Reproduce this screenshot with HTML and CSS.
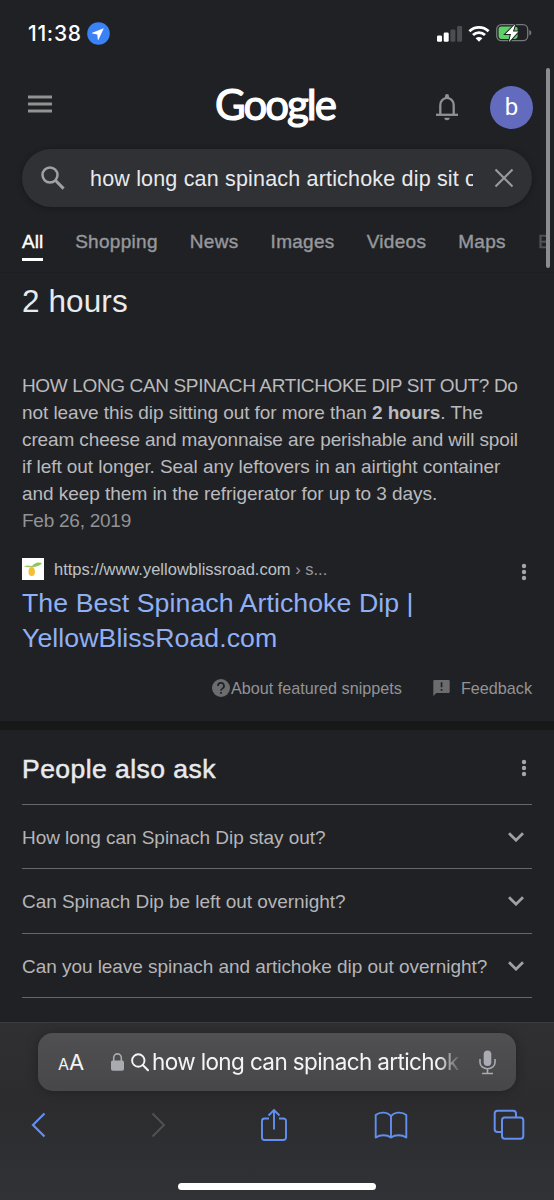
FILE: index.html
```html
<!DOCTYPE html>
<html lang="en">
<head>
<meta charset="utf-8">
<title>Search results</title>
<link rel="stylesheet" href="styles.css">
</head>
<body>
<div class="phone">
  <div class="status">
    <span class="clock">11:38</span>
    <svg class="location" width="23" height="23" viewBox="0 0 23 23"><circle cx="11.5" cy="11.5" r="11.3" fill="#3b82f7"/><path d="M16.8 6.2 5.2 10.8q-.8.5.1.8l5 .8.5 5.2q.3.8.8 0z" fill="#fff"/></svg>
    <svg class="signal" width="26" height="17" viewBox="0 0 26 17"><rect x="0" y="10.5" width="5" height="6.3" rx="1.2" fill="#fff"/><rect x="6.7" y="7.5" width="5" height="9.3" rx="1.2" fill="#fff"/><rect x="13.4" y="4.5" width="5" height="12.3" rx="1.2" fill="#4c4d50"/><rect x="20.1" y="1" width="5" height="15.8" rx="1.2" fill="#4c4d50"/></svg>
    <svg class="wifi" width="22" height="17" viewBox="0 0 22 17"><g fill="none" stroke="#fff" stroke-width="2.8"><path d="M1.4 6.3a13.8 13.8 0 0 1 19.2 0"/><path d="M5 10.1a8.6 8.6 0 0 1 12 0"/></g><path d="M11 16.7 7.6 13.3a4.9 4.9 0 0 1 6.8 0z" fill="#fff"/></svg>
    <svg class="battery" width="36" height="20" viewBox="0 0 36 20"><rect x=".7" y="1.7" width="31" height="16" rx="4.6" fill="none" stroke="#77787b" stroke-width="1.3"/><rect x="2.6" y="3.5" width="19" height="12.4" rx="2.8" fill="#5fd068"/><path d="M33.3 7v5.600q2.100-.8 2.100-2.800t-2.100-2.800z" fill="#77787b"/><path d="M19.300 1.100 9.500 11h5.500l-2.100 8L22.400 8.500h-5.500z" fill="#fff" stroke="#202124" stroke-width="2" paint-order="stroke"/></svg>
  </div>

  <header class="header">
    <svg class="menu" width="24" height="18" viewBox="0 0 24 18"><path d="M0 2h24M0 9h24M0 16h24" stroke="#919293" stroke-width="2.800"/></svg>
    <div class="logo">Google</div>
    <svg class="bell" width="22" height="27" viewBox="0 0 22 27"><path d="M4.300 20V11.200a6.700 7.300 0 0 1 13.400 0V20" fill="none" stroke="#8f9194" stroke-width="2.300"/><path d="M0 20.800h22" stroke="#8f9194" stroke-width="2.300"/><path d="M9 4V2a2 2 0 0 1 4 0v2zM8.300 23.800h5.400a2.700 2.400 0 0 1-5.400 0z" fill="#8f9194"/></svg>
    <div class="avatar">b</div>
  </header>

  <div class="search">
    <svg class="search-glass" width="24" height="24" viewBox="0 0 24 24" fill="none" stroke="#a0a1a4"><circle cx="9" cy="9" r="7.500" stroke-width="2.500"/><path d="m14.300 14.300 8.300 8.300" stroke-width="3"/></svg>
    <div class="query">how long can spinach artichoke dip sit out</div>
    <svg class="clear" width="20" height="20" viewBox="0 0 20 20"><path d="m1.500 1.500 17 17m0-17-17 17" stroke="#98999c" stroke-width="2.200"/></svg>
  </div>

  <nav class="tabs">
    <span class="tab active">All</span><span class="tab">Shopping</span><span class="tab">News</span><span class="tab">Images</span><span class="tab">Videos</span><span class="tab">Maps</span><span class="tab faded">B</span>
  </nav>

  <main class="answer">
    <div class="headline">2 hours</div>
    <p class="snippet">
      <span class="line l1">HOW LONG CAN SPINACH ARTICHOKE DIP SIT OUT? Do</span>
      <span class="line l2">not leave this dip sitting out for more than <b>2 hours</b>. The</span>
      <span class="line l3">cream cheese and mayonnaise are perishable and will spoil</span>
      <span class="line l4">if left out longer. Seal any leftovers in an airtight container</span>
      <span class="line l5">and keep them in the refrigerator for up to 3 days.</span>
      <span class="line date">Feb 26, 2019</span>
    </p>
    <div class="source">
      <svg width="22" height="22" viewBox="0 0 22 22"><path d="M0 0h22v22H0z" fill="#fff"/><path d="M10 8q4-5 10-3-3 4-9 3z" fill="#8dc45b"/><path d="M2 8q4-1 8 0 4 0 7-1-4 3-8 2-5 1-7-1z" fill="#9ccc65"/><ellipse cx="9.700" cy="13.500" rx="3.200" ry="4.600" fill="#f4bf35"/></svg>
      <span class="url">https://www.yellowblissroad.com <span class="crumb">› s...</span></span>
      <svg class="dots" width="6" height="18" viewBox="0 0 6 18" fill="#a5a6a9"><circle cx="3" cy="3" r="2.200"/><circle cx="3" cy="9" r="2.200"/><circle cx="3" cy="15" r="2.200"/></svg>
    </div>
    <a class="title">The Best Spinach Artichoke Dip |<br>YellowBlissRoad.com</a>
    <div class="meta">
      <svg width="18" height="18" viewBox="0 0 18 18"><circle cx="9" cy="9" r="9" fill="#6b6c6e"/><path d="M6 7a3 3 0 1 1 4.600 2.400Q9 10.400 9 11.800" fill="none" stroke="#202124" stroke-width="1.700"/><path d="M8.100 13h1.800v1.800H8.100z" fill="#202124"/></svg>
      <span>About featured snippets</span>
      <svg class="flag" width="17" height="17" viewBox="0 0 17 17"><path d="M1.500 0h14q1.200 0 1.200 1.200v10.500q0 1.200-1.200 1.200H3.300L.3 16V1.200Q.3 0 1.500 0z" fill="#6b6c6e"/><path d="M7.700 2.300h1.700v5H7.700zM7.700 9h1.700v1.700H7.700z" fill="#202124"/></svg>
      <span>Feedback</span>
    </div>
  </main>

  <section class="ask">
    <div class="ask-head">
      <h2>People also ask</h2>
      <svg class="dots" width="6" height="18" viewBox="0 0 6 18" fill="#a5a6a9"><circle cx="3" cy="3" r="2.200"/><circle cx="3" cy="9" r="2.200"/><circle cx="3" cy="15" r="2.200"/></svg>
    </div>
    <div class="question"><span>How long can Spinach Dip stay out?</span><svg width="16" height="10" viewBox="0 0 16 10"><path d="m1 1.200 7 7 7-7" fill="none" stroke="#a0a1a4" stroke-width="2.700"/></svg></div>
    <div class="question"><span>Can Spinach Dip be left out overnight?</span><svg width="16" height="10" viewBox="0 0 16 10"><path d="m1 1.200 7 7 7-7" fill="none" stroke="#a0a1a4" stroke-width="2.700"/></svg></div>
    <div class="question"><span>Can you leave spinach and artichoke dip out overnight?</span><svg width="16" height="10" viewBox="0 0 16 10"><path d="m1 1.200 7 7 7-7" fill="none" stroke="#a0a1a4" stroke-width="2.700"/></svg></div>
  </section>

  <footer class="browser">
    <div class="address">
      <div class="reader"><small>A</small>A</div>
      <svg class="lock" width="13" height="18" viewBox="0 0 13 18"><rect y="7.500" width="13" height="10.300" rx="1.800" fill="#aaabb0"/><path d="M2.700 8V4.700a3.800 3.800 0 0 1 7.600 0V8" fill="none" stroke="#aaabb0" stroke-width="1.600"/></svg>
      <svg class="glass" width="18" height="19" viewBox="0 0 18 19" fill="none" stroke="#f4f4f5" stroke-linecap="round"><circle cx="7.300" cy="7.500" r="6.200" stroke-width="1.900"/><path d="m12 12.200 5 5" stroke-width="2.100"/></svg>
      <div class="address-text">how long can spinach artichok</div>
      <svg class="mic" width="17" height="25" viewBox="0 0 17 25"><rect x="4.700" y=".5" width="7.600" height="15.500" rx="3.800" fill="#aaabb3"/><path d="M1 9v3.500a7.500 6.300 0 0 0 15 0V9M8.500 19v4M3 23.500h11" fill="none" stroke="#aaabb3" stroke-width="1.600"/></svg>
    </div>
    <div class="toolbar">
      <svg width="15" height="26" viewBox="0 0 15 26"><path d="M13.500 1.500 2 13l11.500 11.500" fill="none" stroke="#628ff0" stroke-width="2.200"/></svg>
      <svg class="forward" width="15" height="26" viewBox="0 0 15 26"><path d="M1.500 1.500 13 13 1.500 24.500" fill="none" stroke="#505155" stroke-width="2"/></svg>
      <svg class="share" width="28" height="34" viewBox="0 0 28 34" fill="none" stroke="#628ff0" stroke-width="1.900"><path d="M9 10.500H4.500A2.500 2.500 0 0 0 2 13v16.500A2.500 2.500 0 0 0 4.500 32h19a2.500 2.500 0 0 0 2.500-2.500V13a2.500 2.500 0 0 0-2.500-2.500H19M14 21.500V2M8.500 7.500 14 2l5.500 5.500"/></svg>
      <svg class="bookmarks" width="34" height="28" viewBox="0 0 34 28" fill="none" stroke="#628ff0" stroke-width="1.900" stroke-linejoin="round"><path d="M17 26.500V5.500C14 .8 6 .5 1.700 4v22.500C6 23.500 13 23.500 17 26.500c4-3 11-3 15.300 0V4C28 .5 20 .8 17 5.500"/></svg>
      <svg class="pages" width="32" height="32" viewBox="0 0 32 32" fill="none" stroke="#628ff0" stroke-width="2"><path d="M8.500 23H4.500A2.800 2.800 0 0 1 1.700 20.200V4.500a2.800 2.800 0 0 1 2.800-2.800h15.700A2.800 2.800 0 0 1 23 4.500V8"/><rect x="9" y="8.500" width="21.300" height="21.300" rx="2.800"/></svg>
    </div>
    <div class="home"></div>
  </footer>
  <div class="scrollbar"></div>
</div>
</body>
</html>
```

FILE: styles.css
```css
* { box-sizing: border-box; }
body { margin: 0; background: #202124; color: #bdc1c6; font-family: "Liberation Sans", Arial, sans-serif; }
svg { display: block; flex: none; }
.phone { position: relative; width: 554px; height: 1200px; overflow: hidden; display: flex; flex-direction: column; white-space: nowrap; }

.status { height: 66px; flex: none; display: flex; align-items: center; padding: 0 22px 0 28px; }
.clock { width: 59px; font: 500 21px Inter, sans-serif; letter-spacing: .7px; color: #fff; }
.signal { margin-left: auto; }
.wifi { margin-left: 5px; }
.battery { margin-left: 6px; }

.header { height: 83px; flex: none; display: flex; align-items: center; padding: 0 21px 0 28px; }
.menu { margin-bottom: 7px; }
.logo { width: 125px; margin: -7px 0 0 163px; font: 400 42px/50px Lato, sans-serif; color: #fff; letter-spacing: -2px; -webkit-text-stroke: 1.200px #fff; }
.bell { margin-left: 96px; }
.avatar { width: 43px; height: 43px; margin-left: auto; border-radius: 50%; background: #626bbd; color: #fff; font: 400 24px/43px Roboto, sans-serif; text-align: center; }

.search { height: 58px; flex: none; margin: 0 22px 0 22px; padding: 0 18px 0 19px; border-radius: 29px; background: #303134; box-shadow: 0 1px 5px #17181a; display: flex; align-items: center; }
.query { width: 383px; margin-left: 25px; padding-top: 1px; overflow: hidden; color: #e8eaed; font-size: 21.500px; line-height: 30px; letter-spacing: .18px; }
.clear { margin-left: auto; }

.tabs { height: 66px; flex: none; display: flex; gap: 32px; padding: 20px 0 0 22px; border-bottom: 1px solid #1d1e20; overflow: hidden; }
.tab { height: 35px; font-size: 19px; line-height: 30px; letter-spacing: .3px; color: #96989c; -webkit-text-stroke: .4px currentColor; }
.active { height: 34px; color: #fff; border-bottom: 3px solid #fff; letter-spacing: 0; }
.faded { color: #505155; }

.answer { height: 448px; flex: none; padding: 8px 22px 0; }
.headline { font-size: 31.500px; line-height: 40px; letter-spacing: .1px; color: #e8eaed; }
.snippet { margin: 51px 0 0; font-size: 19px; line-height: 27px; color: #bababd; }
.line { display: block; }
.l1 { letter-spacing: -.36px; }
.l2 { letter-spacing: -.06px; }
.l3 { letter-spacing: -.12px; }
.l4 { letter-spacing: -.07px; }
.l5 { letter-spacing: -.04px; }
.date { color: #929396; letter-spacing: -.25px; }
.source { height: 26px; margin-top: 22px; display: flex; align-items: center; }
.url { margin-left: 10px; font-size: 16.500px; line-height: 24px; }
.crumb { color: #96989c; }
.dots { margin: 5px 5px 0 auto; }
.title { display: block; margin-top: 4px; color: #8fb0f5; font-size: 26.700px; line-height: 35px; letter-spacing: .06px; }
.meta { display: flex; justify-content: flex-end; align-items: center; margin-top: 21px; color: #929396; font-size: 16.200px; line-height: 22px; }
.meta span { margin-left: 1px; }
.meta .flag { margin-left: 31px; }
.meta .flag + span { margin-left: 11px; }

.ask { height: 301px; flex: none; padding: 0 22px; border-top: 9px solid #171918; }
.ask-head { height: 75px; display: flex; align-items: center; border-bottom: 1px solid #66676a; }
.ask h2 { margin: 4px 0 0; color: #e8eaed; font-size: 26.500px; line-height: 36px; font-weight: 400; letter-spacing: .45px; -webkit-text-stroke: .5px currentColor; }
.ask .dots { margin-top: 2px; }
.question { height: 64.300px; display: flex; align-items: center; justify-content: space-between; padding-right: 8px; font-size: 19px; letter-spacing: -.05px; color: #b5b5b8; border-bottom: 1px solid #66676a; }
.question span { padding-top: 3px; }
.question svg { margin-top: 1px; }

.browser { flex: 1; background: linear-gradient(#303032, #2c2c2e 45%, #303236); border-top: 1px solid #3c3b3e; }
.address { height: 58px; margin: 10px 38px 0; padding: 0 20px; border-radius: 15px; background: linear-gradient(#505052, #474749); box-shadow: 0 1px 10px #222224; display: flex; align-items: center; color: #f4f4f5; }
.reader { width: 53px; font: 22px Inter, sans-serif; }
.reader small { font-size: 16px; }
.glass { margin-left: 7px; }
.address-text { width: 310px; margin-left: 3px; font: 22.500px/30px Inter, sans-serif; letter-spacing: -.62px; -webkit-mask-image: linear-gradient(90deg, #000 92%, transparent); mask-image: linear-gradient(90deg, #000 92%, transparent); }
.mic { margin-left: auto; }
.toolbar { height: 68px; display: flex; align-items: center; padding: 0 29px 0 31px; }
.forward { margin-left: 105px; }
.share { margin-left: 94px; }
.bookmarks { margin-left: 86px; }
.pages { margin-left: auto; }
.home { width: 198px; height: 7px; margin: 24px auto 0; border-radius: 4px; background: #fff; }
.scrollbar { position: absolute; left: 546px; top: 68px; width: 4px; height: 200px; border-radius: 2px; background: #8d8d90; }
```
